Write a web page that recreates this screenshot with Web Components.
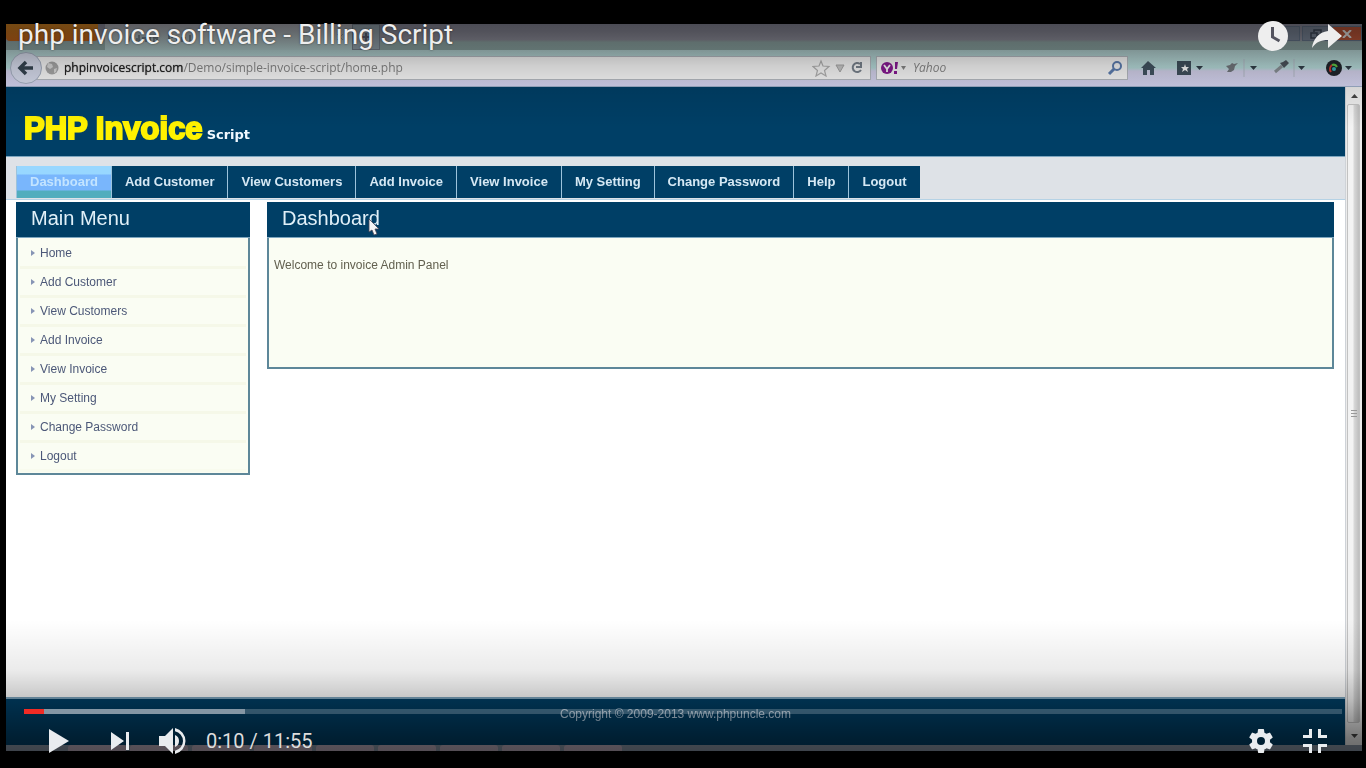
<!DOCTYPE html>
<html lang="en">
<head>
<meta charset="utf-8">
<title>php invoice software - Billing Script</title>
<style>
html,body{margin:0;height:100%;background:#000;font-family:"Liberation Sans",Arial,sans-serif}
</style>
</head>
<body>
<video-player heading="php invoice software - Billing Script" time="0:10 / 11:55">
  <browser-window>
    <invoice-app></invoice-app>
  </browser-window>
</video-player>
<script>
const define=(name,html)=>{
  const t=document.createElement('template');t.innerHTML=html;
  customElements.define(name,class extends HTMLElement{
    constructor(){super();this.attachShadow({mode:'open'}).append(t.content.cloneNode(true));}
    connectedCallback(){
      this.shadowRoot.querySelectorAll('[data-attr]').forEach(e=>{e.textContent=this.getAttribute(e.dataset.attr)||'';});
    }
  });
};

define('video-player',`
<style>
:host{display:flex;position:relative;box-sizing:border-box;min-height:100vh;padding:24px 4px 17px 6px;background:#000;overflow:hidden}
*{box-sizing:border-box}
.frame{flex:1;min-width:0;display:flex}
::slotted(*){flex:1;min-width:0}
button{display:grid;place-items:center;padding:0;border:0;background:none;color:#e9ecef;line-height:0}
svg{display:block}
.top{position:absolute;inset:0 0 auto 0;height:128px;padding:18px 21px 0 18px;display:flex;align-items:flex-start;justify-content:space-between;
 background:linear-gradient(rgba(0,0,0,.55) 0,rgba(0,0,0,.42) 32px,rgba(0,0,0,.18) 66px,rgba(0,0,0,.08) 92px,rgba(0,0,0,0) 128px)}
h1{margin:0;font:400 28px/34px Roboto,sans-serif;color:#eee;text-shadow:0 0 2px rgba(0,0,0,.6)}
.acts{display:flex;gap:18px}
.bottom{position:absolute;inset:auto 0 0 0;height:148px;padding:89px 24px 0;
 background:linear-gradient(rgba(0,0,0,0) 0,rgba(0,0,0,.08) 50px,rgba(0,0,0,.22) 78px,rgba(0,0,0,.5) 118px,rgba(0,0,0,.6) 148px)}
.bar{height:5px;display:flex;background:rgba(255,255,255,.2)}
.played{width:20px;background:#f12b24}.loaded{width:201px;background:#8496a4}
.ctl{display:flex;align-items:center;height:54px;padding-left:18px;font:400 20px/24px Roboto,sans-serif;color:#ddd}
.ctl button{height:36px;width:36px}
.next{margin-left:24px}.vol{margin-left:16px}.time{margin-left:16px}.set{margin-left:auto}.full{margin-left:18px}
.ctl .full{margin-right:9px}
</style>
<div class="frame"><slot></slot></div>
<div class="top"><h1 data-attr="heading"></h1>
 <div class="acts">
 <button aria-label="Watch later"><svg width="36" height="36" viewBox="0 0 36 36"><circle cx="18" cy="18" r="15" fill="#eee"/><path d="M17.500 9v10l7 4" fill="none" stroke="#54545f" stroke-width="3"/></svg></button>
 <button aria-label="Share"><svg width="36" height="36" viewBox="0 0 36 36"><path d="M19 6 33 18 19 30V22C12 22 7 24 3 30 4 21 10 14 19 13Z" fill="#eee"/></svg></button>
 </div></div>
<div class="bottom"><div class="bar"><div class="played"></div><div class="loaded"></div></div>
 <div class="ctl">
 <button aria-label="Play"><svg width="36" height="36" viewBox="0 0 36 36"><path d="M7 6 27 18 7 30Z" fill="currentColor"/></svg></button>
 <button class="next" aria-label="Next"><svg width="36" height="36" viewBox="0 0 36 36"><path d="M9 9 22 18 9 27ZM24 9h3v18h-3Z" fill="currentColor"/></svg></button>
 <button class="vol" aria-label="Mute"><svg width="36" height="36" viewBox="0 0 36 36"><path d="M5 13h6l8-8v26l-8-8H5Z M21 12a6.500 6.500 0 0 1 0 12Z M21 5a13.300 13.300 0 0 1 0 26v-3.200a10 10 0 0 0 0-19.600Z" fill="currentColor"/></svg></button>
 <span class="time" data-attr="time"></span>
 <button class="set" aria-label="Settings"><svg width="30" height="30" viewBox="0 0 24 24"><path d="M19.140 12.940c.04-.3.06-.61.06-.94s-.02-.64-.07-.94l2.030-1.580a.49.49 0 0 0 .12-.61l-1.920-3.320a.49.49 0 0 0-.59-.22l-2.390.96c-.5-.38-1.030-.7-1.620-.94l-.36-2.540a.48.48 0 0 0-.48-.41h-3.840a.48.48 0 0 0-.47.41l-.36 2.540c-.59.24-1.130.57-1.620.94l-2.390-.96a.48.48 0 0 0-.59.22L2.740 8.870a.48.48 0 0 0 .12.61l2.030 1.580a7.500 7.500 0 0 0 0 1.880l-2.030 1.580a.49.49 0 0 0-.12.61l1.920 3.320c.12.22.37.29.59.22l2.390-.96c.5.38 1.030.7 1.620.94l.36 2.540c.05.24.24.41.48.41h3.840c.24 0 .44-.17.47-.41l.36-2.540c.59-.24 1.130-.56 1.620-.94l2.390.96c.22.08.47 0 .59-.22l1.920-3.320a.48.48 0 0 0-.12-.61ZM12 15.200a3.200 3.200 0 1 1 0-6.400 3.200 3.200 0 0 1 0 6.400Z" fill="currentColor"/></svg></button>
 <button class="full" aria-label="Exit full screen"><svg width="36" height="36" viewBox="0 0 36 36"><path d="M12 6h3v9H6v-3h6ZM21 6h3v6h6v3h-9ZM6 21h9v9h-3v-6H6ZM21 21h9v3h-6v6h-3Z" fill="currentColor"/></svg></button>
 </div></div>`);

define('browser-window',`
<style>
:host{display:flex;flex-direction:column;background:#fff;filter:blur(.5px)}
*{box-sizing:border-box}
.tabs{height:26px;display:flex;background:linear-gradient(#8a8a9a,#92929f 60%,#90a8a6 70%,#8aa3a1)}
.menu{width:92px;height:17px;background:linear-gradient(#d58522,#c3641a);border-radius:0 0 4px 4px}
.tab{width:247px;margin-left:7px;background:linear-gradient(#aaaab2,#b0cccc);padding:9px 8px 0 22px;display:flex;justify-content:space-between}
.plus{width:28px;background:#94a3ad;border:1px solid #77808c;display:grid;place-items:center}
.win{margin-left:auto;display:flex;height:17px;gap:2px;padding-top:2px}
.win button{width:28px;padding:0;border:1px solid #67778c;background:#7c8799;display:grid;place-items:center}
.win .x{background:#c0583a;width:30px}
.tools{height:37px;display:flex;align-items:center;padding:0 0 0 4px;background:linear-gradient(#b4d2d2 0,#b9dedd 18px,#d6d4ee 21px,#d5d5f1);border-bottom:1px solid #9fb0ca}
.back{width:32px;height:32px;border-radius:50%;border:1px solid #a8b2c4;background:#dadff0;padding:0;display:grid;place-items:center;margin-right:-6px;z-index:1}
.field{height:24px;display:flex;align-items:center;background:#fcfcfc;border:1px solid #b8bdc4}
.url{flex:1;min-width:0;padding:0 6px 0 8px}
.s{width:252px;margin-left:5px;padding:0 4px}
.addr{flex:1;margin-left:5px;font:12px/18px "Open Sans",sans-serif;color:#888;white-space:nowrap}
.addr b{font-weight:400;color:#222;text-shadow:0 0 1px #444}
input{flex:1;min-width:0;border:0;padding:0;background:none;margin-left:6px;font:italic 12px/18px "Open Sans",sans-serif;outline:0}
input::placeholder{color:#8a8a8a}
.ext{display:flex;align-items:center;width:234px;padding:0 9px 0 12px;justify-content:space-between}
.ext svg,.field svg{display:block;flex:none}
.body{flex:1;display:flex;min-height:0}
::slotted(*){flex:1;min-width:0}
.scroll{width:17px;border-left:1px solid #cfd3d8;background:#ececec;display:flex;flex-direction:column}
.scroll svg{display:block}
.thumb{flex:1;margin:0 2px 0 1px;border:1px solid #c2c2c2;border-radius:2px;background:linear-gradient(90deg,#f3f3f3 45%,#d8d8d8 55%,#bdbdbd);display:grid;place-items:center}
.task{height:6px;background:#8793a3;display:flex;gap:4px;padding-left:62px}
.task i{width:58px;background:#b8a9b8;border-radius:3px 3px 0 0}
</style>
<div class="tabs"><div class="menu"></div><div class="tab"><svg width="66" height="10" viewBox="0 0 66 10"><path d="M1 9 4 2l3 7M12 2v7M10 5v3M16 9V5h3v4M23 4v5M27 9V5h3v4M42 9V2h3v3M50 5v4M55 9V5h3v4M63 2v7" fill="none" stroke="#59606c" stroke-width="2" opacity=".6"/></svg><svg width="8" height="8" viewBox="0 0 8 8"><path d="m1 1 6 6M7 1 1 7" stroke="#667" opacity=".5"/></svg></div><div class="plus"><svg width="10" height="10" viewBox="0 0 10 10"><path d="M5 1v8M1 5h8" stroke="#445" stroke-width="2" opacity=".7"/></svg></div>
<div class="win"><button aria-label="Minimise"></button><button aria-label="Restore"><svg width="12" height="10" viewBox="0 0 12 10"><path d="M4 3V1h7v5H8M1 4h6v5H1Z" fill="none" stroke="#3d4858" stroke-width="1.500"/></svg></button><button class="x" aria-label="Close"><svg width="10" height="8" viewBox="0 0 10 8"><path d="m1 0 8 8M9 0 1 8" stroke="#eee" stroke-width="2"/></svg></button></div></div>
<div class="tools">
<button class="back" aria-label="Back"><svg width="18" height="16" viewBox="0 0 18 16"><path d="M9 2 3 8l6 6M3 8h13" fill="none" stroke="#364552" stroke-width="3.500"/></svg></button>
<div class="field url"><svg width="14" height="14" viewBox="0 0 14 14"><circle cx="7" cy="7" r="6.500" fill="#aaa"/><path d="m3 2 4 1 1 3-3 2-3-2ZM9 8l3-1-1 4-2 1Z" fill="#dedede"/></svg>
<div class="addr"><b>phpinvoicescript.com</b>/Demo/simple-invoice-script/home.php</div>
<svg width="52" height="18" viewBox="0 0 52 18"><path d="m9 2 2 5 6 .5-4.500 4 1.500 5.500-5-3-5 3 1.500-5.500L1 7.500 7 7Z" fill="none" stroke="#b4b4b4" stroke-width="1.200"/><path d="M24 6h8l-4 7Z" fill="#ccc" stroke="#aaa"/><path d="M48 5a4.500 4.500 0 1 0 1 6M49 3v5h-5" fill="none" stroke="#7c8590" stroke-width="2"/></svg></div>
<div class="field s"><svg width="26" height="14" viewBox="0 0 26 14"><circle cx="6" cy="7" r="6" fill="#8a1a95"/><path d="m3 4 3 4 3-4M6 8v3" fill="none" stroke="#fff" stroke-width="1.800"/><path d="M14 1h3l-1 7h-2ZM13 10h3v3h-3Z" fill="#8a1a95"/><path d="M20 5h5l-2.500 4Z" fill="#888"/></svg>
<input aria-label="Search" placeholder="Yahoo"><svg width="16" height="16" viewBox="0 0 16 16"><circle cx="10" cy="6" r="4" fill="none" stroke="#5f80b4" stroke-width="2"/><path d="m7 9-5 5" stroke="#5f80b4" stroke-width="3"/></svg></div>
<div class="ext">
<svg width="16" height="16" viewBox="0 0 16 16"><path d="M8 1 1 8h2v7h4v-5h3v5h4V8h2Z" fill="#435563"/></svg>
<svg width="39" height="16" viewBox="-9 0 39 16"><path d="M1 1h14v14H1Z" fill="#41515e"/><path d="m9 4 1 3h3l-2 2 1 3-3-2-3 2 1-3-2-2h3Z" fill="#fff"/><path d="M20 6h7l-3.500 4Z" fill="#333f4a"/></svg>
<svg width="42" height="20" viewBox="-8 0 42 20"><path d="m1 8 4-1 2-2 2 1 4-1-3 3-1 4-3 2H2l2-3Z" fill="#74797f"/><path d="M19 1v18" stroke="#b6bdca"/><path d="M25 8h7l-3.500 4Z" fill="#333f4a"/></svg>
<svg width="36" height="20" viewBox="0 0 36 20"><path d="m5 14 7-6" stroke="#8b9298" stroke-width="3"/><path d="m10 5 4 5 2-2 3-3-3-3-3 2Z" fill="#4d565e"/><path d="M24 1v18" stroke="#b6bdca"/><path d="M31 8h7l-3.500 4Z" transform="translate(-3)" fill="#333f4a"/></svg>
<svg width="36" height="18" viewBox="-8 0 36 18"><circle cx="9" cy="9" r="8" fill="#20252c"/><path d="M6 13a5 5 0 0 1 1-7" fill="none" stroke="#d63b31" stroke-width="2"/><path d="M7 6a4 4 0 0 1 5 2" fill="none" stroke="#62c646" stroke-width="2"/><circle cx="9" cy="10" r="2" fill="#36b2bc"/><path d="M20 7h7l-3.500 4Z" fill="#333f4a"/></svg>
</div></div>
<div class="body"><slot></slot>
<div class="scroll"><svg width="16" height="17" viewBox="0 0 16 17"><path d="M5 11h7L8.500 7Z" fill="#444"/></svg>
<div class="thumb"><svg width="8" height="9" viewBox="0 0 8 9"><path d="M1 1.500h6M1 4.500h6M1 7.500h6" stroke="#999"/></svg></div>
<svg width="16" height="22" viewBox="0 0 16 22"><path d="M5 11h7L8.500 15Z" fill="#444"/></svg></div></div>
<div class="task"><i></i><i></i><i></i><i></i><i></i><i></i><i></i><i></i><i></i></div>`);

define('nav-tab',`
<style>
:host{display:block;flex:none;background:#003f66;border-left:1px solid #9cc3dc}
a{display:block;padding:0 13px;font:700 13px/32px "Liberation Sans",Arial,sans-serif;color:#d5e8f4;text-decoration:none;white-space:nowrap}
:host([active]){background:linear-gradient(#98d7ff 0,#98d7ff 8px,#79b6fc 9px,#79b6fc 24px,#51adbd 25px)}
:host([active]) a{color:#c3e4ff}
</style><a href="#"><slot></slot></a>`);

define('menu-link',`
<style>
:host{display:block;padding:0 11px;border-bottom:3px solid #f5f8e8}
:host(:last-child){border-bottom-color:#f8fbee}
a{display:flex;align-items:center;gap:5px;font:12px/26px "Liberation Sans",Arial,sans-serif;color:#4c5878;text-decoration:none}
svg{display:block}
</style><a href="#"><svg width="4" height="6" viewBox="0 0 4 6"><path d="M0 0 4 3 0 6Z" fill="#8795b5"/></svg><slot></slot></a>`);

define('titled-panel',`
<style>
:host{display:block;box-sizing:border-box;border:2px solid #5d8799;border-top:0;background:#fafdf3}
h2{margin:0 -2px;padding:0 15px;background:#003f66;color:#e0f0f8;font:400 20px/32px "Liberation Sans",Arial,sans-serif;height:36px;box-sizing:border-box;border-bottom:1px solid #7da6bf}
</style><h2 data-attr="heading"></h2><slot></slot>`);

define('invoice-app',`
<style>
:host{display:flex;flex-direction:column;background:#fff}
*{box-sizing:border-box}
header{height:70px;background:#003f66;padding:24px 18px 0;border-bottom:1px solid #7da6bf}
.logo{display:flex;align-items:baseline;gap:4px;text-decoration:none}
.logo b{font:700 31px/36px Impact,"Liberation Sans",sans-serif;color:#fff200;-webkit-text-stroke:2px #fff200}
.logo small{font:900 13px/16px "DejaVu Sans",sans-serif;color:#f0f8ff}
nav{display:flex;height:43px;padding:9px 10px 1px;background:#dee2e7;border-bottom:1px solid #b5d2e5}
main{flex:1;display:flex;align-items:flex-start;padding:2px 11px 0 10px;gap:17px}
.side{flex:none;width:234px}
.side .list{padding:2px 2px 1px}
.content{flex:1;min-width:0;position:relative;height:167px}
p{margin:20px 5px;font:12px/14px "Liberation Sans",Arial,sans-serif;color:#62604f}
.pointer{position:absolute;left:99px;top:16px}
footer{height:48px;padding:8px 0 0;background:#003f66;border-top:2px solid #7da6bf;text-align:center;font:12px/14px "Liberation Sans",Arial,sans-serif;color:#b7d0e4}
</style>
<header><a class="logo" href="#"><b>PHP Invoice</b><small>Script</small></a></header>
<nav><nav-tab active>Dashboard</nav-tab><nav-tab>Add Customer</nav-tab><nav-tab>View Customers</nav-tab><nav-tab>Add Invoice</nav-tab><nav-tab>View Invoice</nav-tab><nav-tab>My Setting</nav-tab><nav-tab>Change Password</nav-tab><nav-tab>Help</nav-tab><nav-tab>Logout</nav-tab></nav>
<main>
<titled-panel class="side" heading="Main Menu"><div class="list"><menu-link>Home</menu-link><menu-link>Add Customer</menu-link><menu-link>View Customers</menu-link><menu-link>Add Invoice</menu-link><menu-link>View Invoice</menu-link><menu-link>My Setting</menu-link><menu-link>Change Password</menu-link><menu-link>Logout</menu-link></div></titled-panel>
<titled-panel class="content" heading="Dashboard"><p>Welcome to invoice Admin Panel</p>
<svg class="pointer" width="12" height="18" viewBox="0 0 12 18"><path d="M1 1v13l3-2 2 5 3-1-2-5h4Z" fill="#f4f4f4" stroke="#445" stroke-width=".8"/></svg></titled-panel>
</main>
<footer>Copyright © 2009-2013 www.phpuncle.com</footer>`);
</script>
</body>
</html>
